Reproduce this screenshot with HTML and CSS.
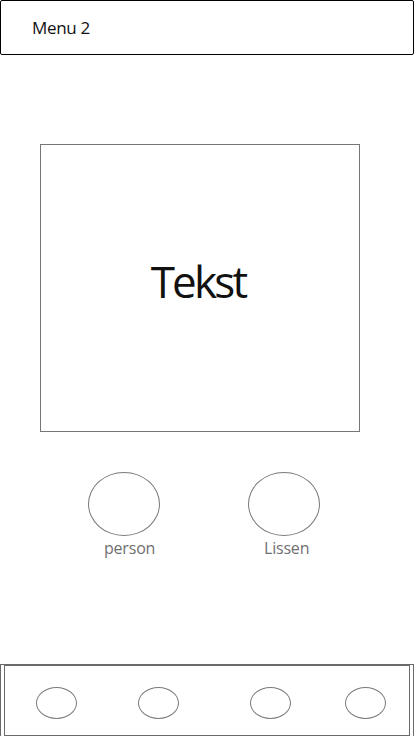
FILE: index.html
```html
<!DOCTYPE html>
<html>
<head>
<meta charset="utf-8">
<link rel="stylesheet" href="styles.css">
</head>
<body>
<div class="page">
  <header class="menu-bar"><span class="menu-title">Menu 2</span></header>
  <main class="content">
    <section class="text-box"><span class="text-box-label">Tekst</span></section>
    <div class="choices">
      <div class="choice choice-person">
        <div class="choice-circle"></div>
        <span class="choice-label">person</span>
      </div>
      <div class="choice choice-lissen">
        <div class="choice-circle"></div>
        <span class="choice-label">Lissen</span>
      </div>
    </div>
  </main>
  <footer class="tab-bar">
    <div class="tab-inner">
      <div class="tab-dot dot-1"></div>
      <div class="tab-dot dot-2"></div>
      <div class="tab-dot dot-3"></div>
      <div class="tab-dot dot-4"></div>
    </div>
  </footer>
</div>
</body>
</html>
```
FILE: styles.css
```css
* { box-sizing: border-box; }
html, body { margin: 0; padding: 0; background: #fff; }
body { font-family: "Open Sans", "Noto Sans", sans-serif; }
.page {
  width: 414px;
  height: 736px;
  display: flex;
  flex-direction: column;
}
.menu-bar {
  height: 55px;
  border: 1px solid #000;
  border-radius: 2px;
  display: flex;
  align-items: center;
  padding-left: 31px;
}
.menu-title {
  font-size: 17px;
  color: #111;
  letter-spacing: -0.3px;
}
.content {
  flex: 1;
  display: flex;
  flex-direction: column;
}
.text-box {
  margin: 89px 0 0 40px;
  width: 320px;
  height: 288px;
  border: 1px solid #767676;
  display: flex;
  align-items: center;
  justify-content: center;
}
.text-box-label {
  font-size: 44px;
  line-height: 60px;
  color: #111;
  letter-spacing: -2.8px;
  margin-right: 4px;
  margin-top: -14px;
}
.choices {
  display: flex;
  margin-top: 40px;
}
.choice {
  display: flex;
  flex-direction: column;
  align-items: flex-start;
}
.choice-person { margin-left: 88px; width: 86px; }
.choice-lissen { margin-left: 74px; width: 80px; }
.choice-circle {
  width: 72px;
  height: 64px;
  border: 1px solid #7a7a7a;
  border-radius: 50%;
}
.choice-label {
  font-size: 16px;
  color: #707070;
  line-height: 20px;
  margin-top: 2px;
  margin-left: 16px;
  letter-spacing: -0.2px;
}
.tab-bar {
  height: 72px;
  border: 1px solid #6a6a6a;
  border-bottom: 0;
  padding: 0 3px;
  display: flex;
}
.tab-inner {
  flex: 1;
  border: 1px solid #6a6a6a;
  display: flex;
  align-items: center;
  padding-top: 4px;
}
.tab-dot {
  width: 41px;
  height: 32px;
  border: 1px solid #7a7a7a;
  border-radius: 50%;
}
.dot-1 { margin-left: 31px; }
.dot-2 { margin-left: 61px; }
.dot-3 { margin-left: 71px; }
.dot-4 { margin-left: 54px; }
```
